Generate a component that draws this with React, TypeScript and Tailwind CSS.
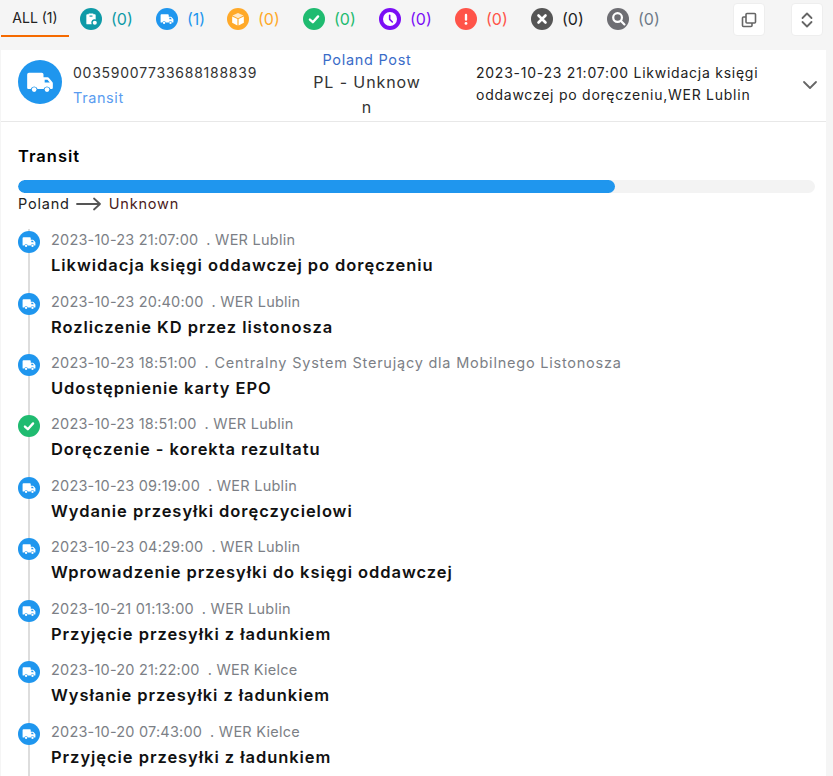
import type { ReactNode } from 'react'

const FONT = "font-['Inter','Noto_Sans',sans-serif]"

const Truck = ({ size = 14 }: { size?: number }) => (
  <svg width={size} height={size} viewBox="0 0 24 24" fill="#fff">
    <path d="M1 5.5A1.5 1.5 0 0 1 2.500 4h11A1.500 1.500 0 0 1 15 5.500V8h3.500a1.500 1.500 0 0 1 1.200.600l3 3.600c.2.300.300.600.300.900V17a1 1 0 0 1-1 1h-1.100a3 3 0 0 0-5.800 0H9.900a3 3 0 0 0-5.800 0H2a1 1 0 0 1-1-1z" />
    <circle cx="7" cy="18.500" r="2" />
    <circle cx="18" cy="18.500" r="2" />
    <path d="M16 10h2.400l2 2.500H16z" fill="currentColor" />
  </svg>
)

const Check = ({ size = 14 }: { size?: number }) => (
  <svg width={size} height={size} viewBox="0 0 24 24" fill="none" stroke="#fff" strokeWidth="4" strokeLinecap="round" strokeLinejoin="round">
    <path d="M5 13l5 4.500L19 7.500" />
  </svg>
)

const Clipboard = () => (
  <svg width="14" height="14" viewBox="0 0 24 24" fill="#fff">
    <path d="M4 5.500A1.500 1.500 0 0 1 5.500 4H8V2.500h8V4h2.500A1.500 1.500 0 0 1 20 5.500V13a5.500 5.500 0 0 0-7 7.500l.2.500H5.500A1.500 1.500 0 0 1 4 19.500z" />
    <rect x="9.500" y="6" width="5" height="2" fill="#0e9aa7" />
    <circle cx="18.500" cy="18.500" r="3.500" />
  </svg>
)

const Box = () => (
  <svg width="14" height="14" viewBox="0 0 24 24" fill="#fff">
    <path d="M12 1.500l9.500 4.500L12 10.500 2.500 6z" opacity=".75" />
    <path d="M2 7.500l9 4.300V23l-9-4.500z" />
    <path d="M22 7.500l-9 4.300V23l9-4.500z" />
  </svg>
)

const Clock = () => (
  <svg width="16" height="16" viewBox="0 0 24 24" fill="none">
    <circle cx="12" cy="12" r="10.500" fill="#fff" />
    <path d="M11.500 6.500v6l4 4" stroke="#7b0ff5" strokeWidth="2.400" strokeLinecap="round" strokeLinejoin="round" />
  </svg>
)

const Alert = () => (
  <svg width="14" height="14" viewBox="0 0 24 24" fill="#fff">
    <rect x="10" y="3" width="4" height="12" rx="2" />
    <circle cx="12" cy="19.500" r="2.400" />
  </svg>
)

const Cross = () => (
  <svg width="14" height="14" viewBox="0 0 24 24" fill="none" stroke="#fff" strokeWidth="4.500" strokeLinecap="round">
    <path d="M6 6l12 12M18 6L6 18" />
  </svg>
)

const Search = () => (
  <svg width="15" height="15" viewBox="0 0 24 24" fill="none" stroke="#fff" strokeWidth="3.500" strokeLinecap="round">
    <circle cx="10.500" cy="10.500" r="7" />
    <path d="M16 16l5.500 5.500" />
  </svg>
)

type Tab = { icon: ReactNode; count: number; bg: string; text: string; width: string }

const tabs: Tab[] = [
  { icon: <Clipboard />, count: 0, bg: 'bg-[#0e9aa7]', text: 'text-[#0e9aa7]', width: 'w-[76px]' },
  { icon: <span className="text-[#1f96ee]"><Truck /></span>, count: 1, bg: 'bg-[#1f96ee]', text: 'text-[#1f96ee]', width: 'w-[71px]' },
  { icon: <Box />, count: 0, bg: 'bg-[#ffa929]', text: 'text-[#ffa929]', width: 'w-[76px]' },
  { icon: <Check />, count: 0, bg: 'bg-[#1fbb70]', text: 'text-[#1fbb70]', width: 'w-[76px]' },
  { icon: <Clock />, count: 0, bg: 'bg-[#7b0ff5]', text: 'text-[#7b0ff5]', width: 'w-[76px]' },
  { icon: <Alert />, count: 0, bg: 'bg-[#ff5449]', text: 'text-[#ff5449]', width: 'w-[76px]' },
  { icon: <Cross />, count: 0, bg: 'bg-[#555555]', text: 'text-[#222222]', width: 'w-[76px]' },
  { icon: <Search />, count: 0, bg: 'bg-[#6e6e73]', text: 'text-[#6e7a88]', width: 'w-[76px]' },
]

type Event = { time: string; place: string; title: string; done?: boolean; rowClass: string; placeClass?: string }

const events: Event[] = [
  { time: '2023-10-23 21:07:00', place: '. WER Lublin', title: 'Likwidacja księgi oddawczej po doręczeniu', rowClass: 'h-[62px]' },
  { time: '2023-10-23 20:40:00', place: '. WER Lublin', title: 'Rozliczenie KD przez listonosza', rowClass: 'h-[61px]' },
  { time: '2023-10-23 18:51:00', place: '. Centralny System Sterujący dla Mobilnego Listonosza', title: 'Udostępnienie karty EPO', rowClass: 'h-[61px]', placeClass: 'tracking-[0.77px]' },
  { time: '2023-10-23 18:51:00', place: '. WER Lublin', title: 'Doręczenie - korekta rezultatu', done: true, rowClass: 'h-[62px]' },
  { time: '2023-10-23 09:19:00', place: '. WER Lublin', title: 'Wydanie przesyłki doręczycielowi', rowClass: 'h-[61px]' },
  { time: '2023-10-23 04:29:00', place: '. WER Lublin', title: 'Wprowadzenie przesyłki do księgi oddawczej', rowClass: 'h-[62px]' },
  { time: '2023-10-21 01:13:00', place: '. WER Lublin', title: 'Przyjęcie przesyłki z ładunkiem', rowClass: 'h-[61px]' },
  { time: '2023-10-20 21:22:00', place: '. WER Kielce', title: 'Wysłanie przesyłki z ładunkiem', rowClass: 'h-[62px]' },
  { time: '2023-10-20 07:43:00', place: '. WER Kielce', title: 'Przyjęcie przesyłki z ładunkiem', rowClass: 'h-[61px]' },
]

export default function App() {
  return (
    <div className={`h-[776px] w-[833px] overflow-hidden bg-[#f5f5f5] ${FONT}`}>
      <div className="flex h-[50px] items-start pl-px">
        <div className="flex h-[37px] w-[68px] items-center justify-center border-b-2 border-[#f56a00] text-[14px] text-[#222]">
          ALL (1)
        </div>
        <div className="ml-[11px] flex h-[37px] items-center">
          {tabs.map((tab, i) => (
            <div key={i} className={`flex items-center gap-[9px] ${tab.width}`}>
              <span className={`grid h-[22px] w-[22px] place-items-center rounded-full ${tab.bg}`}>{tab.icon}</span>
              <span className={`text-[16px] ${tab.text}`}>({tab.count})</span>
            </div>
          ))}
        </div>
        <div className="ml-[50px] mt-[3px] flex gap-[26px]">
          <button type="button" className="grid h-[33px] w-[32px] place-items-center rounded-[4px] border border-[#eeeeee] bg-white text-[#666]">
            <svg width="16" height="16" viewBox="0 0 16 16" fill="none" stroke="currentColor" strokeWidth="1.600">
              <rect x="5" y="1.500" width="9.500" height="9.500" rx="1" />
              <path d="M5 5H2.500a1 1 0 0 0-1 1v7.500a1 1 0 0 0 1 1H10a1 1 0 0 0 1-1V11" />
            </svg>
          </button>
          <button type="button" className="grid h-[33px] w-[32px] place-items-center rounded-[4px] border border-[#eeeeee] bg-white text-[#666]">
            <svg width="14" height="18" viewBox="0 0 14 18" fill="none" stroke="currentColor" strokeWidth="1.800" strokeLinecap="round" strokeLinejoin="round">
              <path d="M2.500 7L7 2.500 11.500 7M2.500 11L7 15.500 11.500 11" />
            </svg>
          </button>
        </div>
      </div>

      <div className="ml-px h-[726px] w-[825px] overflow-hidden bg-white">
        <div className="flex h-[72px] border-b border-[#e8e8e8]">
          <div className="ml-[17px] mt-[10px] grid h-[44px] w-[44px] shrink-0 place-items-center rounded-full bg-[#1f96ee] text-[#1f96ee]">
            <Truck size={28} />
          </div>
          <div className="ml-[11px] mt-[12px] w-[240px] shrink-0">
            <div className="text-[14px] leading-[22px] tracking-[0.75px] text-[#333]">00359007733688188839</div>
            <div className="mt-[3px] text-[14.500px] leading-[22px] tracking-[0.6px] text-[#5a9cf0]">Transit</div>
          </div>
          <div className="w-[108px] shrink-0 pt-[1px] text-center">
            <div className="text-[14.500px] leading-[18px] tracking-[0.7px] text-[#3a6cc8]">Poland Post</div>
            <div className="mt-[1px] text-[16px] leading-[25px] tracking-[0.9px] break-all text-[#333]">PL - Unknown</div>
          </div>
          <div className="ml-[55px] mt-[12px] w-[300px] shrink-0 text-[14px] leading-[22px] tracking-[0.75px] text-[#222]">
            2023-10-23 21:07:00 Likwidacja księgi oddawczej po doręczeniu,WER Lublin
          </div>
          <svg className="ml-[26px] mt-[29px]" width="16" height="12" viewBox="0 0 16 12" fill="none" stroke="#666" strokeWidth="1.800" strokeLinecap="round" strokeLinejoin="round">
            <path d="M2 3l6 6 6-6" />
          </svg>
        </div>

        <div className="pl-[17px] pr-[10px]">
          <h2 className="pt-[22px] text-[16.500px] leading-[24px] font-semibold tracking-[1px] text-black">Transit</h2>
          <div className="mt-[12px] h-[13px] w-[797px] overflow-hidden rounded-full bg-[#f3f3f3]">
            <div className="h-full w-[597px] rounded-full bg-[#1f96ee]" />
          </div>
          <div className="flex h-[22px] items-center text-[14.500px] tracking-[0.8px] text-[#222]">
            <span>Poland</span>
            <svg className="ml-[6px] mr-[7px]" width="26" height="14" viewBox="0 0 26 14" fill="none" stroke="#555" strokeWidth="1.800" strokeLinecap="round" strokeLinejoin="round">
              <path d="M1 7h23M18 1.500L24 7l-6 5.500" />
            </svg>
            <span className="text-[#4a2020]">Unknown</span>
          </div>

          <div className="mt-[14px]">
            {events.map((event, i) => (
              <div key={i} className={`flex ${event.rowClass}`}>
                <div className="relative w-[33px] shrink-0">
                  <div className="absolute bottom-0 left-[10px] top-0 w-[1.500px] bg-[#dddddd]" />
                  <span className={`relative mt-[2px] grid h-[22px] w-[22px] place-items-center rounded-full ${event.done ? 'bg-[#1fbb70]' : 'bg-[#1f96ee] text-[#1f96ee]'}`}>
                    {event.done ? <Check /> : <Truck />}
                  </span>
                </div>
                <div>
                  <div className="flex h-[22px] items-center whitespace-nowrap text-[14.500px] text-[#7c7f86]">
                    <span className="tracking-[0.2px]">{event.time}</span>
                    <span className={`ml-[8px] ${event.placeClass ?? 'tracking-[0.25px]'}`}>{event.place}</span>
                  </div>
                  <div className="mt-[2px] whitespace-nowrap text-[16.500px] leading-[24px] font-semibold tracking-[0.95px] text-[#111]">
                    {event.title}
                  </div>
                </div>
              </div>
            ))}
          </div>
        </div>
      </div>
    </div>
  )
}
